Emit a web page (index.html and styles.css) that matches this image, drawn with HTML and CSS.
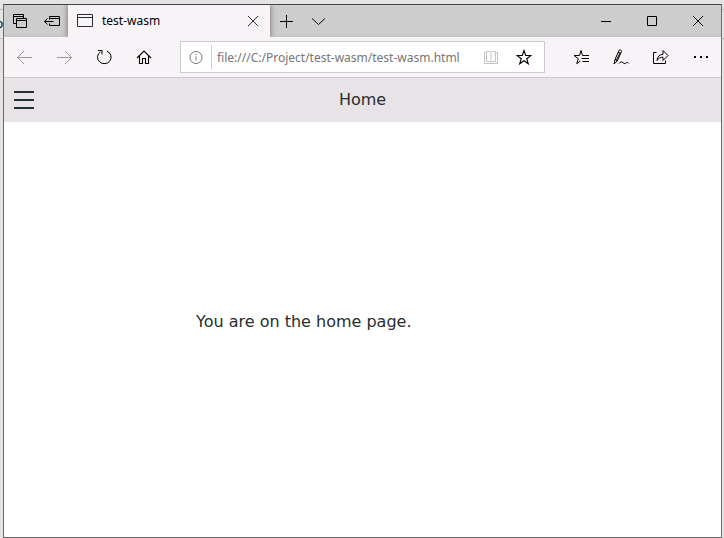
FILE: index.html
```html
<!DOCTYPE html>
<html lang="en">
<head>
    <meta charset="utf-8">
    <title>test-wasm</title>
    <link rel="stylesheet" href="styles.css">
</head>
<body>
    <div class="behind">o</div>
    <div class="window">
        <!-- Tab strip -->
        <div class="tabs">
            <button class="tab-button" aria-label="Tabs you've set aside">
                <svg width="16" height="16" viewBox="0 0 16 16"><path d="M4.5 10.5h-3v-9h10v4M1.5 3.5h10M4.5 5.500h10v9h-10zM4.5 7.5h10"/></svg>
            </button>
            <button class="tab-button" aria-label="Set these tabs aside">
                <svg width="16" height="16" viewBox="0 0 16 16"><path d="M5.5 6.5v-3h10v9h-10v-2M5.5 5.5h10M.5 8.5h9M3.5 5.5l-3 3 3 3"/></svg>
            </button>
            <div class="tab">
                <svg width="16" height="16" viewBox="0 0 16 16"><path d="M.5 1.5h15v12H.5zM.5 4.5h15"/></svg>
                <span class="tab-title">test-wasm</span>
                <button class="tab-close" aria-label="Close tab">
                    <svg width="16" height="16" viewBox="0 0 16 16"><path d="M3 3l10 10M13 3L3 13"/></svg>
                </button>
            </div>
            <button class="tab-button" aria-label="New tab">
                <svg width="16" height="16" viewBox="0 0 16 16"><path d="M8.5 2v13M2 8.5h13"/></svg>
            </button>
            <button class="tab-button" aria-label="Show tab previews">
                <svg width="16" height="16" viewBox="0 0 16 16"><path d="M2 5.5l6.500 6 6.500-6"/></svg>
            </button>
            <div class="window-controls">
                <button aria-label="Minimize">
                    <svg width="16" height="16" viewBox="0 0 16 16"><path d="M3 8.5h10"/></svg>
                </button>
                <button aria-label="Maximize">
                    <svg width="16" height="16" viewBox="0 0 16 16"><path d="M3.5 3.5h9v9h-9z"/></svg>
                </button>
                <button aria-label="Close">
                    <svg width="16" height="16" viewBox="0 0 16 16"><path d="M3 3l10 10M13 3L3 13"/></svg>
                </button>
            </div>
        </div>

        <!-- Navigation -->
        <div class="toolbar">
            <button class="tool" aria-label="Back" disabled>
                <svg width="16" height="16" viewBox="0 0 16 16"><path d="M16 8.5H1.5M8 2L1.5 8.5 8 15"/></svg>
            </button>
            <button class="tool" aria-label="Forward" disabled>
                <svg width="16" height="16" viewBox="0 0 16 16"><path d="M1 8.5h14.5M9 2l6.500 6.500L9 15"/></svg>
            </button>
            <button class="tool" aria-label="Refresh">
                <svg width="16" height="16" viewBox="0 0 16 16"><path d="M4.500 2.800a6.800 6.500 0 1 0 6.500-.6M2 1.500h4v4"/></svg>
            </button>
            <button class="tool" aria-label="Home">
                <svg class="bold" width="16" height="16" viewBox="0 0 16 16"><path d="M1 9l7-7 7 7M3.500 7v7.500h3v-5h3v5h3V7"/></svg>
            </button>
            <div class="address">
                <svg class="info" width="16" height="16" viewBox="0 0 16 16"><circle cx="8" cy="8.500" r="6"/><path d="M8 7.500v4M8 5v1.200"/></svg>
                <input type="text" aria-label="Address" value="file:///C:/Project/test-wasm/test-wasm.html">
                <button class="reading" aria-label="Reading view" disabled>
                    <svg width="16" height="16" viewBox="0 0 16 16"><path d="M3.500 3.500h-2v11h13v-11h-2M3.500 2.500h3.500l1 1 1-1h3.500v10H9l-1 1-1-1H3.500zM8 3.500v10"/></svg>
                </button>
                <button aria-label="Add to favorites">
                    <svg class="bold" width="16" height="16" viewBox="0 0 16 16"><path d="M8 1.500l1.700 5h5.200l-4.200 3.200 1.600 5.100L8 11.700l-4.300 3.100 1.600-5.100L1.100 6.500h5.200z"/></svg>
                </button>
            </div>
            <button class="tool" aria-label="Favorites">
                <svg width="16" height="16" viewBox="0 0 16 16"><path d="M16 6.500H9.500L8 1.500l-1.500 5H1l4.300 3.200-1.600 5 3.800-2.700M8.500 9.500H16M9.500 12.500H16"/></svg>
            </button>
            <button class="tool" aria-label="Add notes">
                <svg width="16" height="16" viewBox="0 0 16 16"><path d="M1 15l1-4.500L6 1.500c1-1 2.800-.5 2.500 1L4.200 12 1 15M2 10.500l2.200 1.500M5 3l3 1.500M7 4l-3.500 7M6 14.500c1.500-2 3-2 4.200-.7s2.500 1.200 3.200-.3c.8-.5 1.500.5 2.100.8"/></svg>
            </button>
            <button class="tool" aria-label="Share">
                <svg width="16" height="16" viewBox="0 0 16 16"><path d="M3.500 3.500h-3v11h12v-3M4 11.500c.3-4 2.500-6 6-6.200V1.500l5 5-5 5V8.200c-2.500 0-4.500.8-6 3.300z"/></svg>
            </button>
            <button class="tool" aria-label="Settings and more">
                <svg width="16" height="16" viewBox="0 0 16 16"><path class="dots" d="M1 7h2v2H1zM7 7h2v2H7zM13 7h2v2h-2z"/></svg>
            </button>
        </div>

        <!-- Page -->
        <header class="header">
            <button class="menu" aria-label="Menu">
                <svg width="20" height="20" viewBox="0 0 20 20"><path d="M0 2h20M0 10h20M0 18h20"/></svg>
            </button>
            <h1>Home</h1>
        </header>
        <main class="content">
            <p>You are on the home page.</p>
        </main>
    </div>
</body>
</html>
```
FILE: styles.css
```css
* {
    box-sizing: border-box;
}

body {
    display: flex;
    height: 100vh;
    margin: 0;
    padding: 4px 2px 0 3px;
    background-color: #e4e4e4;
    font-family: "DejaVu Sans", sans-serif;
    color: #292e2e;
}

/* Sliver of the window underneath */
.behind {
    position: absolute;
    top: 9px;
    left: 0;
    right: 0;
    height: 30px;
    border-top: 1px solid #bbb;
    border-bottom: 1px solid #bbb;
    font: 12px/28px "Noto Sans", sans-serif;
    text-indent: -4px;
    color: #000;
}

.window {
    position: relative;
    display: flex;
    flex: 1;
    flex-direction: column;
    min-width: 0;
    border: 1px solid #6b6b6b;
    border-top-color: #444;
    background-color: #fff;
}

button {
    display: flex;
    align-items: center;
    justify-content: center;
    padding: 0;
    border: none;
    background: none;
    color: #000;
}

svg {
    flex: none;
    fill: none;
    stroke: currentColor;
    stroke-width: 1;
}

.bold {
    stroke-width: 1.1;
}

/* Tab strip */
.tabs {
    display: flex;
    height: 32px;
    background: linear-gradient(#cdcdcd 28px, #c4c4c4);
}

.tab-button {
    width: 32px;
}

.tab {
    display: flex;
    align-items: center;
    width: 202px;
    padding-left: 9px;
    background-color: #f7f3f7;
    box-shadow: 0 0 6px rgba(0, 0, 0, 0.5);
    clip-path: inset(0 -8px);
}

.tab-title {
    flex: 1;
    margin-left: 9px;
    font: 12px/16px "Noto Sans", sans-serif;
    color: #000;
}

.tab-close {
    width: 34px;
    height: 32px;
    color: #333;
}

.window-controls {
    display: flex;
    margin-left: auto;
}

.window-controls button {
    width: 46px;
}

/* Navigation */
.toolbar {
    display: flex;
    align-items: center;
    height: 41px;
    border-bottom: 1px solid #cbc8cb;
    background-color: #f7f3f7;
}

.tool {
    width: 40px;
    height: 40px;
}

.tool:disabled {
    color: #999;
}

.address {
    display: flex;
    flex: 1;
    align-items: center;
    height: 32px;
    min-width: 0;
    margin: 0 16px;
    border: 1px solid #cbcbcf;
    background-color: #fff;
}

.address .info {
    margin: 0 7px;
    color: #777;
}

.address input {
    flex: 1;
    min-width: 0;
    height: 24px;
    padding: 0 0 0 5px;
    border: none;
    border-left: 1px solid #ccc;
    background: none;
    font: 12px/16px "Noto Sans", sans-serif;
    color: #767676;
}

.address button {
    width: 40px;
    height: 30px;
}

.address .reading {
    width: 26px;
    color: #c4c4c4;
}

.dots {
    fill: currentColor;
    stroke: none;
}

/* Page */
.header {
    display: grid;
    grid-template-columns: 40px 1fr 40px;
    align-items: center;
    height: 44px;
    background-color: #e7e3e7;
}

.header h1 {
    margin: 0;
    font-size: 16px;
    font-weight: normal;
    line-height: 24px;
    text-align: center;
}

.menu {
    height: 44px;
    color: #292e2e;
}

.menu svg {
    stroke-width: 2;
}

.content {
    display: flex;
    flex: 1;
    align-items: center;
    padding: 0 0 16px 192px;
}

.content p {
    margin: 0;
    line-height: 24px;
}
```
